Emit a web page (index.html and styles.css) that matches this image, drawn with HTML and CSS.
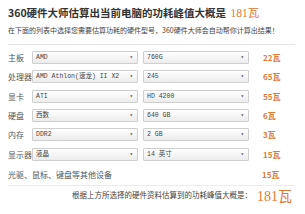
FILE: index.html
```html
<!DOCTYPE html>
<html>
<head>
<meta charset="utf-8">
<link rel="stylesheet" href="styles.css">
</head>
<body>
<div class="page">
  <h1 class="title">360硬件大师估算出当前电脑的功耗峰值大概是 <span class="hot">181<span class="wa">瓦</span></span></h1>
  <p class="intro">在下面的列表中选择您需要估算功耗的硬件型号，360硬件大师会自动帮你计算出结果！</p>
  <div class="rows">
    <div class="row"><span class="label">主板</span><div class="sel s1">AMD<i>▾</i></div><div class="sel s2">760G<i>▾</i></div><span class="watt">22瓦</span></div>
    <div class="row"><span class="label">处理器</span><div class="sel s1">AMD Athlon(速龙) II X2<i>▾</i></div><div class="sel s2">245<i>▾</i></div><span class="watt">65瓦</span></div>
    <div class="row"><span class="label">显卡</span><div class="sel s1">ATI<i>▾</i></div><div class="sel s2">HD 4200<i>▾</i></div><span class="watt">55瓦</span></div>
    <div class="row"><span class="label">硬盘</span><div class="sel s1">西数<i>▾</i></div><div class="sel s2">640 GB<i>▾</i></div><span class="watt">6瓦</span></div>
    <div class="row"><span class="label">内存</span><div class="sel s1">DDR2<i>▾</i></div><div class="sel s2">2 GB<i>▾</i></div><span class="watt">3瓦</span></div>
    <div class="row"><span class="label">显示器</span><div class="sel s1">液晶<i>▾</i></div><div class="sel s2">14 英寸<i>▾</i></div><span class="watt">15瓦</span></div>
    <div class="row last"><span class="label wide">光驱、鼠标、键盘等其他设备</span><span class="watt">15瓦</span></div>
  </div>
  <div class="total">根据上方所选择的硬件资料估算到的功耗峰值大概是：<span class="big">181<span class="wa">瓦</span></span></div>
</div>
</body>
</html>
```
FILE: styles.css
```css
html, body { margin: 0; padding: 0; background: #fff; }
body { font-family: "Noto Sans CJK SC", "Liberation Sans", sans-serif; color: #444; }
.page { padding: 0 10px 0 8px; width: 287px; }
.title {
  margin: 0; padding-top: 5px; height: 14px;
  font-size: 10.5px; line-height: 14px; font-weight: bold; color: #333;
  white-space: nowrap;
}
.hot { color: #e27a36; font-family: "Liberation Serif", "Noto Sans CJK SC", serif; font-size: 11.5px; font-weight: normal; margin-left: 2px; }
.wa { font-family: "Noto Sans CJK SC", sans-serif; }
.intro {
  margin: 0; padding: 6px 0 9px; font-size: 7px; line-height: 10px; color: #444;
  border-bottom: 1px solid #e4e4e4; white-space: nowrap;
}
.rows { display: flex; flex-direction: column; padding-top: 3px; }
.row { display: flex; align-items: center; height: 19.3px; }
.row.last { border-bottom: 1px solid #ececec; height: 21px; }
.label { width: 24px; font-size: 8px; color: #555; white-space: nowrap; }
.label.wide { width: 254px; }
.sel {
  position: relative; box-sizing: border-box; height: 13px; margin-left: 0;
  border: 1px solid #cfcfcf; border-radius: 1px;
  background: linear-gradient(#ffffff, #ececec);
  font-family: "Liberation Mono", "Noto Sans CJK SC", monospace; font-size: 6.5px; line-height: 11px;
  color: #444; padding-left: 3px; white-space: nowrap;
}
.sel i { position: absolute; right: 4px; top: 0; font-style: normal; font-size: 6px; color: #666; }
.s1 { width: 106px; }
.s2 { width: 106px; margin-left: 5px; }
.watt { margin-left: 14px; font-size: 8px; color: #e27a36; font-weight: bold; white-space: nowrap; }
.label.wide + .watt { margin-left: 0; }
.total {
  display: flex; justify-content: flex-end; align-items: center; height: 18px;
  font-size: 7.5px; color: #444; padding-right: 3px;
}
.big { color: #e27a36; font-family: "Liberation Serif", serif; font-size: 14px; margin-left: 5px; }
```
